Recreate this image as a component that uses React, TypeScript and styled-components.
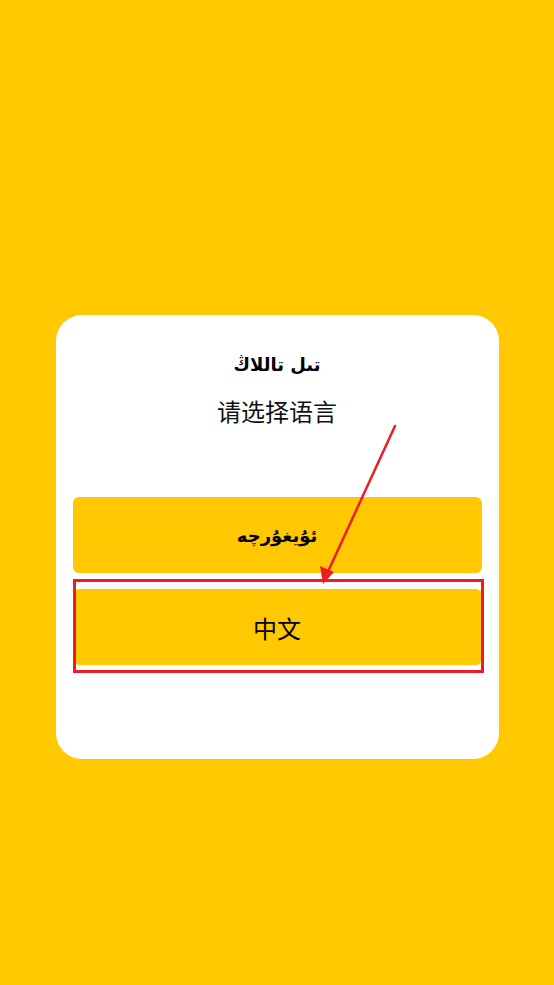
import React from "react";
import { styled, createGlobalStyle } from "styled-components";

const GlobalStyle = createGlobalStyle`
  html, body {
    margin: 0;
    padding: 0;
    background: #ffc800;
  }
  body {
    font-family: "DejaVu Sans", "Noto Sans CJK SC", sans-serif;
  }
`;

const Page = styled.div`
  min-height: 985px;
  background: #ffc800;
  display: flex;
  justify-content: center;
  padding-top: 315px;
  box-sizing: border-box;
`;

const Card = styled.div`
  position: relative;
  width: 443px;
  height: 444px;
  background: #ffffff;
  border-radius: 26px;
  padding: 0 17px;
  box-sizing: border-box;
  display: flex;
  flex-direction: column;
  align-items: stretch;
`;

const Title = styled.div`
  margin-top: 37px;
  text-align: center;
  font-family: "DejaVu Sans", sans-serif;
  font-weight: bold;
  font-size: 18px;
  line-height: 26px;
  color: #000;
`;

const Subtitle = styled.div`
  margin-top: 17px;
  text-align: center;
  font-family: "Noto Sans CJK SC", sans-serif;
  font-size: 24px;
  line-height: 32px;
  color: #111;
`;

const Options = styled.div`
  margin-top: 70px;
  display: flex;
  flex-direction: column;
  gap: 16px;
`;

const LangButton = styled.button<{ $cjk?: boolean }>`
  height: 76px;
  width: 100%;
  border: none;
  border-radius: 6px;
  background: #ffc800;
  color: #000;
  cursor: pointer;
  display: flex;
  align-items: center;
  justify-content: center;
  font-family: ${(p) =>
    p.$cjk ? '"Noto Sans CJK SC", sans-serif' : '"DejaVu Sans", sans-serif'};
  font-weight: ${(p) => (p.$cjk ? "normal" : "bold")};
  font-size: ${(p) => (p.$cjk ? "24px" : "18px")};
`;

const HighlightBox = styled.div`
  position: absolute;
  left: 17px;
  top: 264px;
  width: 411px;
  height: 94px;
  border: 3px solid #ed1c24;
  box-sizing: border-box;
  pointer-events: none;
`;

const ArrowLayer = styled.svg`
  position: absolute;
  left: 0;
  top: 0;
  width: 443px;
  height: 444px;
  pointer-events: none;
  overflow: visible;
`;

const Arrow = () => (
  <ArrowLayer viewBox="0 0 443 444">
    <line
      x1={339}
      y1={111}
      x2={270}
      y2={261}
      stroke="#ed1c24"
      strokeWidth={2.5}
      strokeLinecap="round"
    />
    <polygon points="267,269 264,251 278,257" fill="#ed1c24" />
  </ArrowLayer>
);

export default function App() {
  return (
    <>
      <GlobalStyle />
      <Page>
        <Card>
          <Title dir="rtl">تىل تاللاڭ</Title>
          <Subtitle>请选择语言</Subtitle>
          <Options>
            <LangButton dir="rtl">ئۇيغۇرچە</LangButton>
            <LangButton $cjk>中文</LangButton>
          </Options>
          <HighlightBox />
          <Arrow />
        </Card>
      </Page>
    </>
  );
}
